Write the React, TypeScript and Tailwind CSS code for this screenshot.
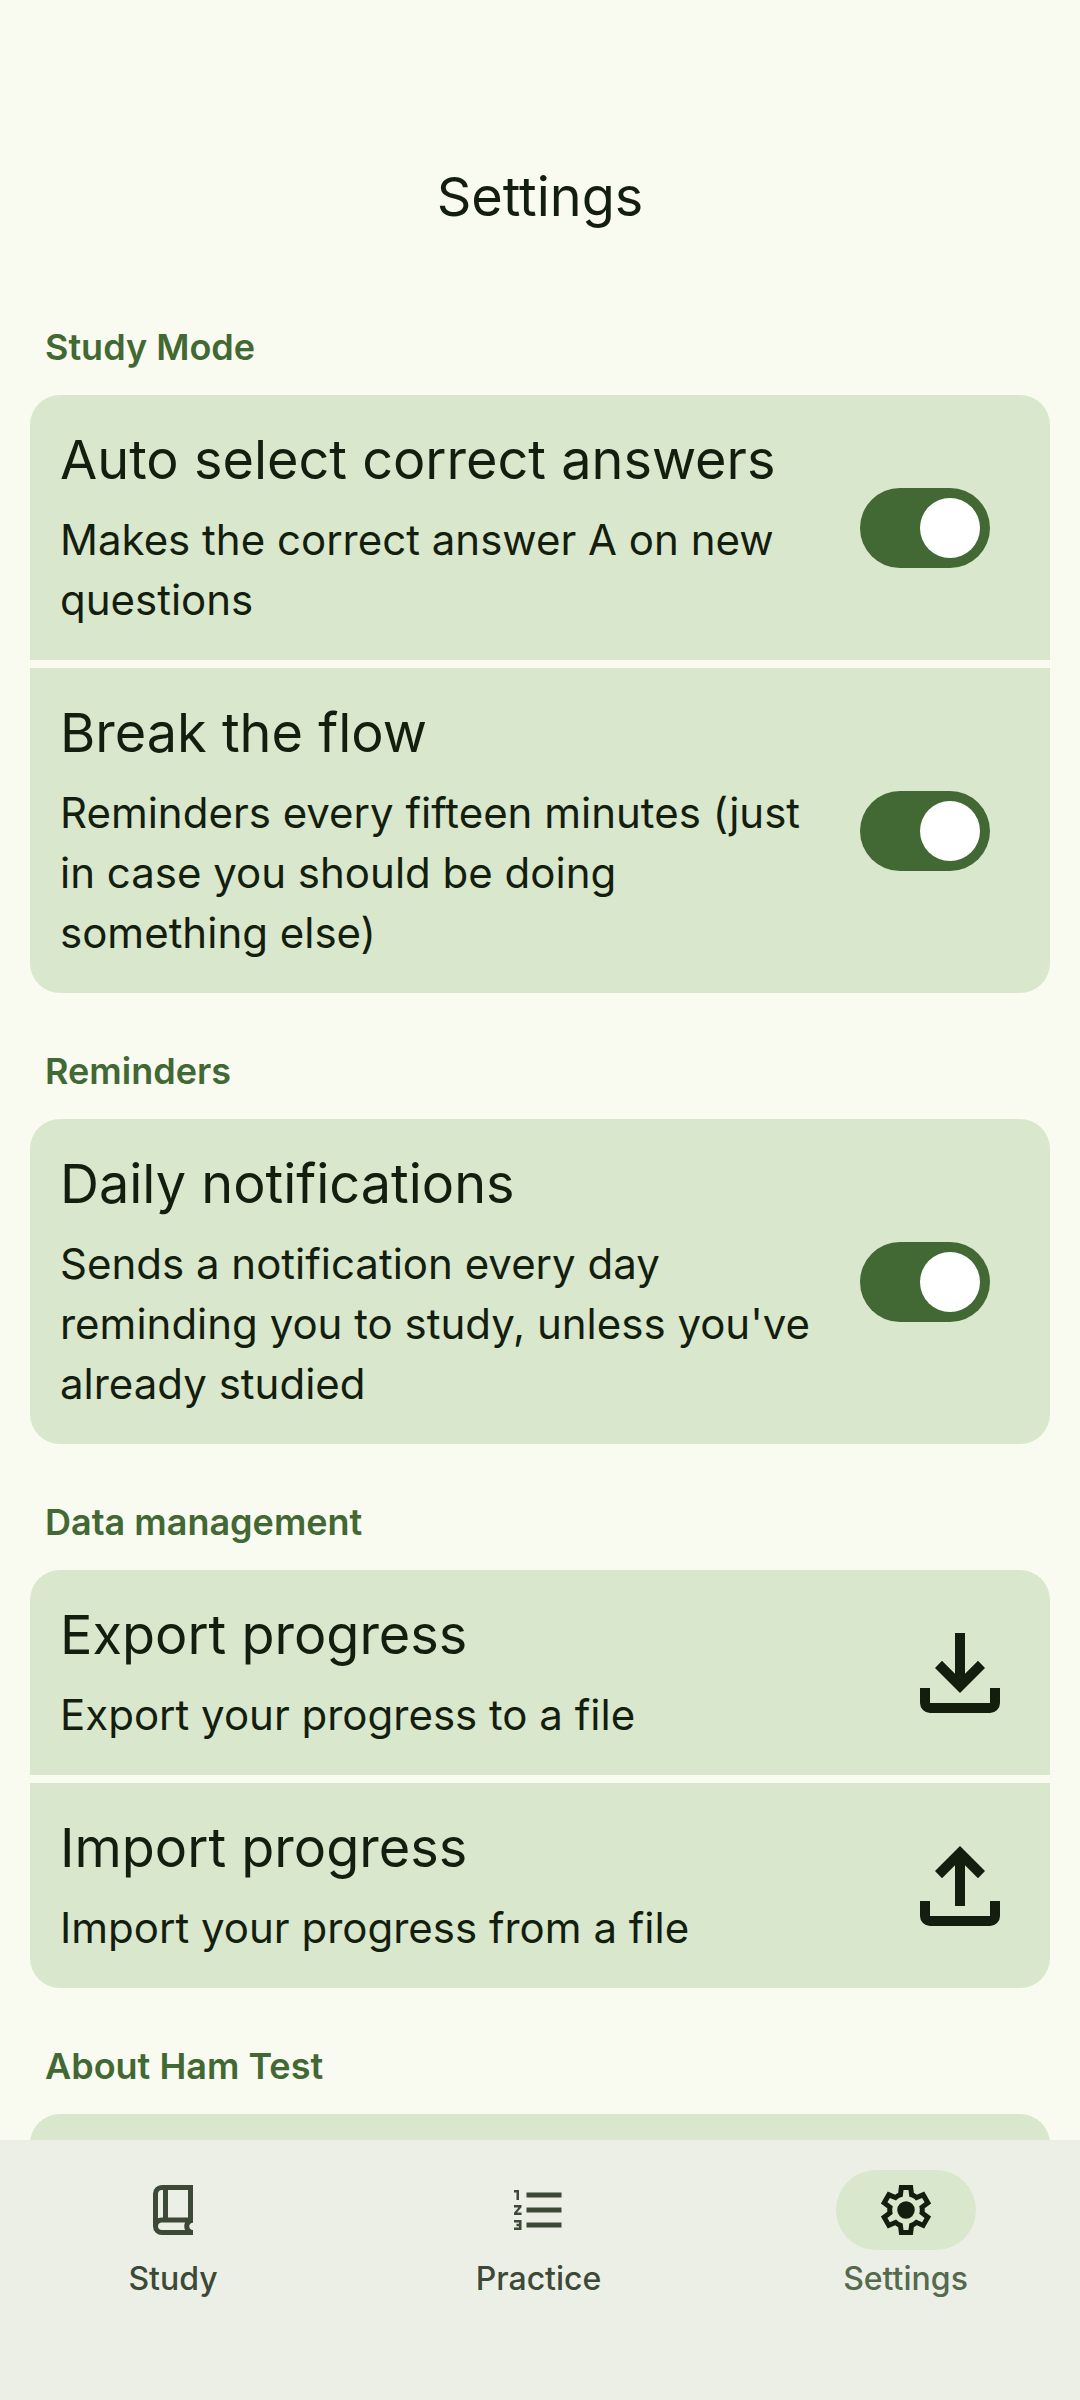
import React, { useState } from 'react';

const icons = {
  download:
    'M12 16l-5-5l1.4-1.45l2.6 2.6V4h2v8.15l2.6-2.6L17 11zm-6 4q-.825 0-1.412-.587T4 18v-3h2v3h12v-3h2v3q0 .825-.587 1.413T18 20z',
  upload:
    'M11 16V7.85l-2.6 2.6L7 9l5-5l5 5l-1.4 1.45l-2.6-2.6V16zm-5 4q-.825 0-1.412-.587T4 18v-3h2v3h12v-3h2v3q0 .825-.587 1.413T18 20z',
  book:
    'M6 15.325q.35-.175.725-.25T7.5 15H8V4h-.5q-.625 0-1.062.438T6 5.5zM10 15h8V4h-8zM7.5 22q-1.45 0-2.475-1.025T4 18.5v-13q0-1.45 1.025-2.475T7.5 2H20v15.1q-.65 0-1.075.413T18.5 18.5q0 .6.425 1.05T20 20V22zm0-2h9.325q-.15-.35-.237-.712T16.5 18.5q0-.4.075-.775t.25-.725H7.5q-.65 0-1.075.438T6 18.5q0 .65.425 1.075T7.5 20z',
  list:
    'M2 17h2v.5H3v1h1v.5H2v1h3v-4H2v1zm1-9h1V4H2v1h1v3zm-1 3h1.8L2 13.1v.9h3v-1H3.2L5 10.9V10H2v1zm5-6v2h14V5H7zm0 14h14v-2H7v2zm0-6h14v-2H7v2z',
  gear:
    'm9.25 22l-.4-3.2q-.325-.125-.612-.3t-.563-.375L4.7 19.375l-2.75-4.75l2.575-1.95Q4.5 12.5 4.5 12.338v-.675q0-.163.025-.338L1.95 9.375l2.75-4.75l2.975 1.25q.275-.2.575-.375t.6-.3l.4-3.2h5.5l.4 3.2q.325.125.613.3t.562.375l2.975-1.25l2.75 4.75l-2.575 1.95q.025.175.025.338v.674q0 .163-.05.338l2.575 1.95l-2.75 4.75l-2.95-1.25q-.275.2-.575.375t-.6.3l-.4 3.2zM11 20h1.975l.35-2.65q.775-.2 1.438-.587t1.212-.938l2.475 1.025l.975-1.7l-2.15-1.625q.125-.35.175-.737T17.5 12t-.05-.787t-.175-.738l2.15-1.625l-.975-1.7l-2.475 1.05q-.55-.575-1.212-.962t-1.438-.588L13 4h-1.975l-.35 2.65q-.775.2-1.437.588t-1.213.937L5.55 7.15l-.975 1.7l2.15 1.6q-.125.375-.175.75t-.05.8q0 .4.05.775t.175.75l-2.15 1.625l.975 1.7l2.475-1.05q.55.575 1.213.963t1.437.587z M12 8.5a3.5 3.5 0 1 0 0 7a3.5 3.5 0 1 0 0-7z',
};

function Icon({ name, className }: { name: keyof typeof icons; className: string }) {
  return (
    <svg viewBox="0 0 24 24" fill="currentColor" fillRule="evenodd" className={className} aria-hidden="true">
      <path d={icons[name]} />
    </svg>
  );
}

function Section({ title, children }: { title: string; children: React.ReactNode }) {
  return (
    <section className="px-[30px]">
      <h2 className="px-[15px] pt-14 pb-[26px] text-[36px] leading-[44px] font-semibold text-[#426834]">{title}</h2>
      <div className="flex flex-col gap-2 overflow-hidden rounded-[30px]">{children}</div>
    </section>
  );
}

function RowText({ title, text }: { title: string; text: string }) {
  return (
    <span className="flex flex-1 flex-col gap-[15px]">
      <span className="text-[54px] leading-[70px]">{title}</span>
      <span className="text-[42px] leading-[60px]">{text}</span>
    </span>
  );
}

function ToggleRow({ title, text }: { title: string; text: string }) {
  const [on, setOn] = useState(true);

  return (
    <label className="flex cursor-pointer items-center gap-10 bg-[#d9e7cc] py-[30px] pr-[60px] pl-[30px]">
      <RowText title={title} text={text} />
      <input type="checkbox" role="switch" className="peer sr-only" checked={on} onChange={() => setOn(!on)} />
      <span className="flex h-20 w-[130px] shrink-0 rounded-full bg-[#c3c8bb] p-[10px] peer-checked:justify-end peer-checked:bg-[#426834]">
        <span className="size-[60px] rounded-full bg-white" />
      </span>
    </label>
  );
}

function ActionRow({ title, text, icon }: { title: string; text: string; icon: keyof typeof icons }) {
  return (
    <button className="flex cursor-pointer items-center gap-10 bg-[#d9e7cc] p-[30px] text-left">
      <RowText title={title} text={text} />
      <Icon name={icon} className="size-[120px] shrink-0" />
    </button>
  );
}

function NavItem({ label, icon, active }: { label: string; icon: keyof typeof icons; active?: boolean }) {
  return (
    <a
      href="#"
      aria-current={active ? 'page' : undefined}
      className={`flex flex-col items-center gap-2 ${active ? 'text-[#54694d]' : 'text-[#3c4936]'}`}
    >
      <span
        className={`flex h-20 w-[140px] items-center justify-center rounded-full ${
          active ? 'bg-[#d9e7cc] text-[#141e0f]' : ''
        }`}
      >
        <Icon name={icon} className="size-[60px]" />
      </span>
      <span className="text-[32px] leading-[42px] font-medium">{label}</span>
    </a>
  );
}

export default function App() {
  return (
    <div className="flex h-screen flex-col bg-[#f9faf0] font-['Inter',sans-serif] text-[#141e0f]">
      <main className="flex-1 overflow-y-auto [scrollbar-width:none]">
        <header className="pt-[162px] pb-[37px] text-center">
          <h1 className="text-[54px] leading-[70px]">Settings</h1>
        </header>

        <Section title="Study Mode">
          <ToggleRow title="Auto select correct answers" text="Makes the correct answer A on new questions" />
          <ToggleRow
            title="Break the flow"
            text="Reminders every fifteen minutes (just in case you should be doing something else)"
          />
        </Section>

        <Section title="Reminders">
          <ToggleRow
            title="Daily notifications"
            text="Sends a notification every day reminding you to study, unless you've already studied"
          />
        </Section>

        <Section title="Data management">
          <ActionRow title="Export progress" text="Export your progress to a file" icon="download" />
          <ActionRow title="Import progress" text="Import your progress from a file" icon="upload" />
        </Section>

        <Section title="About Ham Test">
          <div className="h-40 bg-[#d9e7cc]" />
        </Section>
      </main>

      {/* Bottom navigation */}
      <nav className="grid shrink-0 grid-cols-[346fr_385fr_349fr] bg-[#ecefe6] pt-[30px] pb-[100px]">
        <NavItem label="Study" icon="book" />
        <NavItem label="Practice" icon="list" />
        <NavItem label="Settings" icon="gear" active />
      </nav>
    </div>
  );
}
